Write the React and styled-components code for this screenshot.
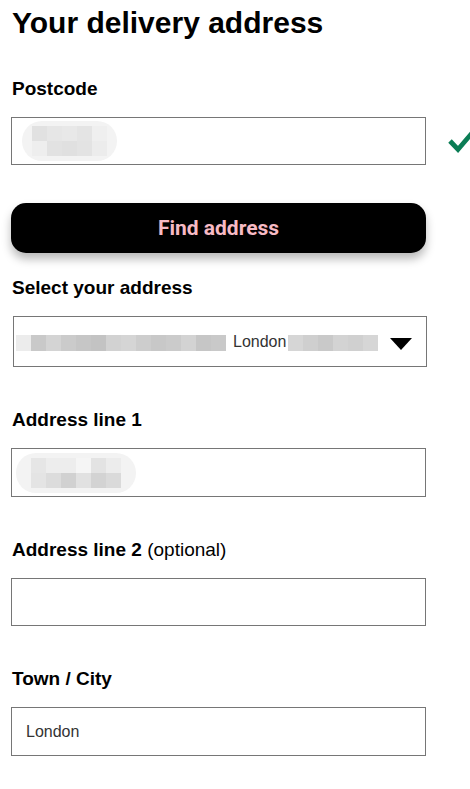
import React from "react";
import styled, { createGlobalStyle } from "styled-components";

const GlobalStyle = createGlobalStyle`
  html, body {
    margin: 0;
    padding: 0;
    background: #fff;
    overflow: hidden;
  }
  body {
    font-family: "Liberation Sans", Arial, sans-serif;
    color: #000;
  }
`;

const Page = styled.div`
  padding: 5px 0 0 11px;
  width: 470px;
  box-sizing: border-box;
`;

const Title = styled.h1`
  margin: 0 0 37px 1px;
  font-size: 30px;
  line-height: 36px;
  font-weight: 700;
`;

const Field = styled.div`
  margin-bottom: ${(p) => p.$gap ?? 42}px;
`;

const Label = styled.label`
  display: block;
  margin: 0 0 17px 1px;
  font-size: 19px;
  line-height: 22px;
  font-weight: 700;
`;

const Optional = styled.span`
  font-weight: 400;
`;

const InputRow = styled.div`
  display: flex;
  align-items: center;
  gap: 21px;
`;

const InputBox = styled.div`
  box-sizing: border-box;
  width: 415px;
  height: ${(p) => p.$height ?? 48}px;
  border: 1px solid #767676;
  background: #fff;
  display: flex;
  align-items: center;
  padding-left: ${(p) => p.$pad ?? 14}px;
  font-size: 16px;
  color: #333;
  flex-shrink: 0;
  position: relative;
  overflow: hidden;
`;

const Check = styled.svg`
  flex-shrink: 0;
  margin-top: 2px;
`;

const Button = styled.button`
  display: block;
  box-sizing: border-box;
  width: 415px;
  height: 50px;
  border: none;
  border-radius: 15px;
  background: #000;
  color: #f7bac4;
  font-family: Roboto, "Liberation Sans", sans-serif;
  font-weight: 700;
  font-size: 21px;
  box-shadow: 0 6px 10px rgba(0, 0, 0, 0.28);
  margin: 0 0 24px 0;
  padding: 0 0 1px 0;
  cursor: pointer;
`;

const SelectBox = styled(InputBox)`
  margin-left: 2px;
  width: 414px;
  justify-content: flex-start;
`;

const Arrow = styled.span`
  position: absolute;
  right: 14px;
  top: 21px;
  width: 0;
  height: 0;
  border-left: 11px solid transparent;
  border-right: 11px solid transparent;
  border-top: 12px solid #000;
`;

const Pill = styled.div`
  display: grid;
  grid-template-columns: repeat(${(p) => p.$cols}, 15px);
  grid-auto-rows: 15px;
  padding: ${(p) => p.$pad};
  background: #f3f3f3;
  border-radius: 22px;
`;

const Cell = styled.div`
  background: ${(p) => p.$c};
`;

const Strip = styled.div`
  display: flex;
  align-items: center;
  height: 100%;
  padding-top: 2px;
`;

const StripCell = styled.div`
  width: 15px;
  height: 16px;
  background: ${(p) => p.$c};
`;

const SelectText = styled.span`
  font-size: 16px;
  color: #333;
  margin: 0 0 0 7px;
  width: 55px;
  overflow: hidden;
  white-space: nowrap;
`;

const Pixels = ({ rows, pad }) => (
  <Pill $cols={rows[0].length} $pad={pad}>
    {rows.flat().map((c, i) => (
      <Cell key={i} $c={c} />
    ))}
  </Pill>
);

const leftStrip = [
  "#ececec", "#c9c9c9", "#d4d4d4", "#cbcbcb", "#c6c6c6", "#c3c3c3",
  "#d2d2d2", "#d5d5d5", "#cdcdcd", "#c8c8c8", "#cbcbcb", "#d3d3d3",
  "#c6c6c6", "#c9c9c9",
];
const rightStrip = ["#d6d6d6", "#cfcfcf", "#c9c9c9", "#d3d3d3", "#d0d0d0", "#d6d6d6"];

export default function App() {
  return (
    <Page>
      <GlobalStyle />
      <Title>Your delivery address</Title>

      <Field $gap={38}>
        <Label>Postcode</Label>
        <InputRow>
          <InputBox $pad={10}>
            <Pixels
              pad="5px 10px 5px 10px"
              rows={[
                ["#e1e1e1", "#e6e6e6", "#e8e8e8", "#e4e4e4", "#efefef"],
                ["#eeeeee", "#e2e2e2", "#e0e0e0", "#e3e3e3", "#ececec"],
              ]}
            />
          </InputBox>
          <Check width="26" height="24" viewBox="0 0 26 24">
            <path d="M3 11 L11 19.5 L25 3" fill="none" stroke="#0b7d55" strokeWidth="4.8" />
          </Check>
        </InputRow>
      </Field>

      <Button>Find address</Button>

      <Field>
        <Label>Select your address</Label>
        <SelectBox $height={51} $pad={2}>
          <Strip>
            {leftStrip.map((c, i) => (
              <StripCell key={i} $c={c} />
            ))}
          </Strip>
          <SelectText>London</SelectText>
          <Strip>
            {rightStrip.map((c, i) => (
              <StripCell key={i} $c={c} />
            ))}
          </Strip>
          <Arrow />
        </SelectBox>
      </Field>

      <Field>
        <Label>Address line 1</Label>
        <InputBox $height={49} $pad={4}>
          <Pixels
            pad="5px 15px 5px 15px"
            rows={[
              ["#e6e6e6", "#ededed", "#ededed", "#f5f5f5", "#e3e3e3", "#ececec"],
              ["#e4e4e4", "#dcdcdc", "#d1d1d1", "#e1e1e1", "#d3d3d3", "#dadada"],
            ]}
          />
        </InputBox>
      </Field>

      <Field>
        <Label>
          Address line 2 <Optional>(optional)</Optional>
        </Label>
        <InputBox />
      </Field>

      <Field $gap={20}>
        <Label>Town / City</Label>
        <InputBox $height={49}>London</InputBox>
      </Field>
    </Page>
  );
}
